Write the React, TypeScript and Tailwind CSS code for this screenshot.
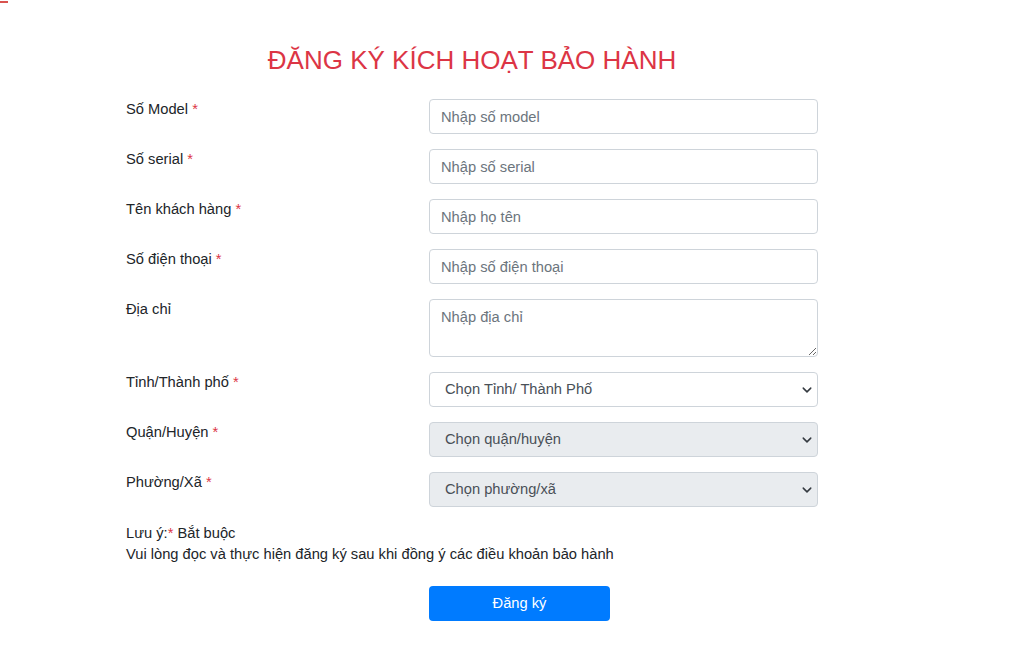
import React from "react";

const rows = [
  { label: "Số Model", required: true, placeholder: "Nhập số model" },
  { label: "Số serial", required: true, placeholder: "Nhập số serial" },
  { label: "Tên khách hàng", required: true, placeholder: "Nhập họ tên" },
  { label: "Số điện thoại", required: true, placeholder: "Nhập số điện thoại" },
];

const selects = [
  { label: "Tỉnh/Thành phố", text: "Chọn Tỉnh/ Thành Phố", disabled: false },
  { label: "Quận/Huyện", text: "Chọn quận/huyện", disabled: true },
  { label: "Phường/Xã", text: "Chọn phường/xã", disabled: true },
];

function Chevron() {
  return (
    <svg width="10" height="10" viewBox="0 0 16 16" className="absolute right-[5px] top-1/2 -translate-y-1/2">
      <path d="M2 5l6 6 6-6" fill="none" stroke="#343a40" strokeWidth="2.4" strokeLinecap="round" strokeLinejoin="round" />
    </svg>
  );
}

function Label({ text, required }: { text: string; required?: boolean }) {
  return (
    <label className="w-[303px] shrink-0 leading-[20px] text-[#212529]">
      {text}
      {required && <span className="text-[#dc3545]"> *</span>}
    </label>
  );
}

export default function App() {
  return (
    <div className="min-h-[663px] bg-white font-['Liberation_Sans',Arial,sans-serif] text-[14.7px]">
      <div className="h-[2px] w-[8px] translate-y-[1px] bg-[#d9534f]" />
      <div className="ml-[126px] w-[692px] pt-[42px]">
        <h1 className="text-center text-[26px] leading-[32px] text-[#dc3545]">ĐĂNG KÝ KÍCH HOẠT BẢO HÀNH</h1>
        <form className="mt-[23px] flex flex-col gap-[15px]" onSubmit={(e) => e.preventDefault()}>
          {rows.map((r) => (
            <div key={r.label} className="flex">
              <Label text={r.label} required={r.required} />
              <input
                placeholder={r.placeholder}
                className="h-[35px] w-[389px] rounded-[4px] border border-[#ced4da] px-[11px] text-[#495057] outline-none placeholder:text-[#6c757d]"
              />
            </div>
          ))}
          <div className="flex">
            <Label text="Địa chỉ" />
            <textarea
              placeholder="Nhập địa chỉ"
              className="h-[58px] w-[389px] resize-y rounded-[4px] border border-[#ced4da] px-[11px] pt-[6px] leading-[22px] text-[#495057] outline-none placeholder:text-[#6c757d]"
            />
          </div>
          {selects.map((s) => (
            <div key={s.label} className="flex">
              <Label text={s.label} required />
              <div
                className={
                  "relative flex h-[35px] w-[389px] items-center rounded-[4px] border border-[#ced4da] pl-[15px] text-[#495057] " +
                  (s.disabled ? "bg-[#e9ecef]" : "bg-white")
                }
              >
                {s.text}
                <Chevron />
              </div>
            </div>
          ))}
          <div className="mt-[1px] leading-[21px] text-[#212529]">
            <div>
              Lưu ý:<span className="text-[#dc3545]">*</span> Bắt buộc
            </div>
            <div>Vui lòng đọc và thực hiện đăng ký sau khi đồng ý các điều khoản bảo hành</div>
          </div>
          <div className="mt-[6px] flex">
            <div className="w-[303px] shrink-0" />
            <button
              type="submit"
              className="h-[35px] w-[181px] rounded-[4px] bg-[#007bff] text-white"
            >
              Đăng ký
            </button>
          </div>
        </form>
      </div>
    </div>
  );
}
